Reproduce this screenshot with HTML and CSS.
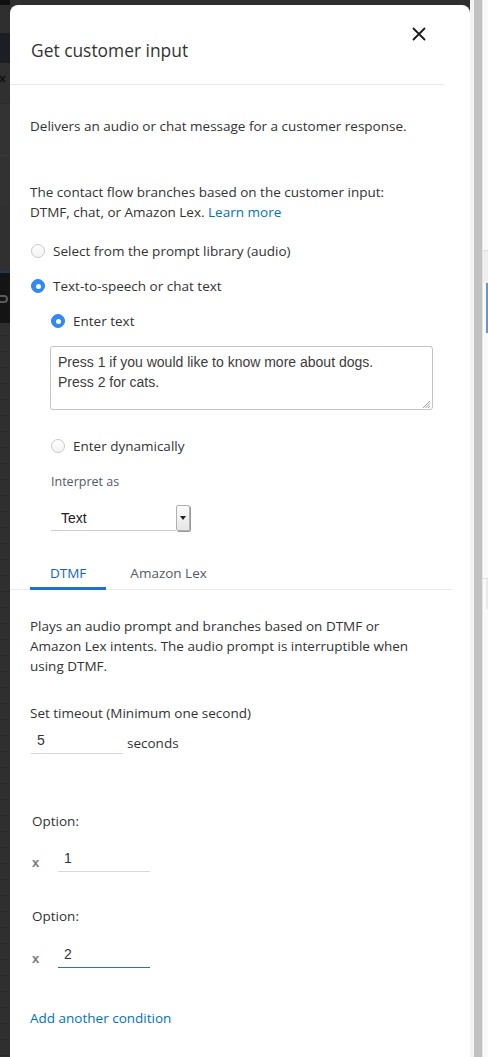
FILE: index.html
```html
<!DOCTYPE html>
<html lang="en">
<head>
<meta charset="utf-8">
<title>Get customer input</title>
<link rel="stylesheet" href="styles.css">
</head>
<body>
<div class="screen">
  <div class="backdrop-left">
    <div class="bg-a"></div>
    <div class="bg-b"></div>
    <div class="bg-c"></div>
    <div class="bg-d"><svg class="bg-x" width="6" height="8" viewBox="0 0 6 8"><path d="M0 1 L5 7 M5 1 L0 7" stroke="#111" stroke-width="1.4"/></svg></div>
    <div class="bg-e"></div>
    <div class="bg-f"></div>
    <div class="bg-g"></div>
    <div class="bg-h"><span class="bg-glyph"></span></div>
    <div class="bg-i"></div>
  </div>

  <main class="panel">
    <header class="panel-header">
      <h1 class="panel-title">Get customer input</h1>
      <button class="close-btn" aria-label="Close">
        <svg width="14" height="14" viewBox="0 0 14 14"><path d="M1.5 1.5 L12.5 12.5 M12.5 1.5 L1.5 12.5" stroke="#1a1a1a" stroke-width="1.8" stroke-linecap="round"/></svg>
      </button>
    </header>

    <section class="panel-body">
      <p class="intro">Delivers an audio or chat message for a customer response.</p>
      <p class="branches">The contact flow branches based on the customer input: DTMF, chat, or Amazon Lex. <a class="link" href="#">Learn more</a></p>

      <div class="radio-row first">
        <span class="radio"></span>
        <span class="radio-label">Select from the prompt library (audio)</span>
      </div>
      <div class="radio-row">
        <span class="radio checked"></span>
        <span class="radio-label">Text-to-speech or chat text</span>
      </div>

      <div class="nested">
        <div class="radio-row">
          <span class="radio checked"></span>
          <span class="radio-label">Enter text</span>
        </div>
        <div class="textarea">Press 1 if you would like to know more about dogs.<br>Press 2 for cats.<span class="grip"><svg width="10" height="10" viewBox="0 0 10 10"><path d="M9 2 L2 9 M9 4.5 L4.5 9 M9 7 L7 9" stroke="#888" stroke-width="0.8"/></svg></span></div>
        <div class="radio-row dyn">
          <span class="radio"></span>
          <span class="radio-label">Enter dynamically</span>
        </div>
        <div class="field-label">Interpret as</div>
        <div class="select">
          <span class="select-value">Text</span>
          <span class="select-btn"><svg width="6" height="4" viewBox="0 0 6 4"><path d="M0 0 H6 L3 4 Z" fill="#222"/></svg></span>
        </div>
      </div>

      <nav class="tabs">
        <span class="tab active">DTMF</span>
        <span class="tab">Amazon Lex</span>
      </nav>

      <p class="plays">Plays an audio prompt and branches based on DTMF or Amazon Lex intents. The audio prompt is interruptible when using DTMF.</p>

      <div class="timeout-label">Set timeout (Minimum one second)</div>
      <div class="timeout-row">
        <span class="input wide">5</span>
        <span class="unit">seconds</span>
      </div>

      <div class="option-label first-opt">Option:</div>
      <div class="option-row">
        <span class="remove">x</span>
        <span class="input">1</span>
      </div>

      <div class="option-label">Option:</div>
      <div class="option-row second">
        <span class="remove">x</span>
        <span class="input focused">2</span>
      </div>

      <a class="link add" href="#">Add another condition</a>
    </section>
  </main>

  <div class="backdrop-right">
    <div class="edge"></div>
    <div class="scroll-track"></div>
    <div class="far">
      <div class="far-a"></div>
      <div class="far-b"></div>
      <div class="far-c"></div>
      <div class="far-d"></div>
      <div class="far-e"></div>
    </div>
  </div>
</div>
</body>
</html>
```

FILE: styles.css
```css
* { box-sizing: border-box; }

html, body {
  margin: 0;
  padding: 0;
  width: 488px;
  height: 1057px;
  overflow: hidden;
}

body {
  font-family: "Open Sans", "Noto Sans", sans-serif;
  font-size: 13.5px;
  color: #333;
  background: #2e2e2e;
}

.screen {
  display: flex;
  height: 1057px;
}

/* left backdrop */
.backdrop-left {
  width: 10px;
  flex: none;
  display: flex;
  flex-direction: column;
  background: repeating-linear-gradient(to bottom, #2f2f2f 0, #2f2f2f 15px, #292929 15px, #292929 16px);
}
.bg-a { height: 5px; background: #0f0f0f; }
.bg-b { height: 28px; background: #2f2f2f; }
.bg-c { height: 30px; background: #1b1e25; }
.bg-d { height: 40px; background: #303030; display: flex; align-items: flex-start; }
.bg-x { margin-top: 12px; }
.bg-e { height: 52px; background: #333; border-top: 1px solid #2a2a2a; }
.bg-f { height: 50px; background: #323232; border-top: 1px solid #3a3a3a; }
.bg-g { height: 68px; background: #303030; border-bottom: 2px solid #1f3a5c; }
.bg-h { height: 50px; background: #141414; display: flex; align-items: center; }
.bg-glyph { width: 8px; height: 8px; border: 2px solid #5a5a5a; border-left: 0; border-radius: 0 4px 4px 0; margin-top: 2px; }
.bg-i { flex: 1; }

/* panel */
.panel {
  width: 460px;
  flex: none;
  margin-top: 5px;
  background: #fff;
  border-radius: 8px 8px 0 0;
  display: flex;
  flex-direction: column;
}

.panel-header {
  width: 435px;
  height: 80px;
  border-bottom: 1px solid #e9ebed;
  display: flex;
  align-items: flex-start;
  justify-content: space-between;
  padding: 0 0 0 21px;
}
.panel-title {
  margin: 34px 0 0 0;
  font-size: 17.4px;
  font-weight: 400;
  line-height: 22px;
  color: #333;
}
.close-btn {
  margin: 22px 19px 0 0;
  padding: 0;
  border: 0;
  background: none;
  width: 14px;
  height: 14px;
  display: flex;
}

.panel-body {
  padding: 0 0 0 20px;
  display: flex;
  flex-direction: column;
  align-items: flex-start;
}

p { margin: 0; line-height: 20px; }

.intro { margin-top: 31px; }
.branches { margin-top: 46px; width: 375px; }

.link { color: #0073bb; text-decoration: none; }

.radio-row {
  display: flex;
  align-items: center;
  height: 20px;
  gap: 8px;
  margin-top: 15px;
}
.radio-row.first { margin-top: 19px; }

.radio {
  width: 14px;
  height: 14px;
  border-radius: 50%;
  border: 1px solid #c9c9c9;
  background: linear-gradient(#fff, #f3f3f3);
  flex: none;
  margin-left: 1px;
  position: relative;
}
.radio.checked {
  border-color: #2f86f2;
  background: #3189f5;
}
.radio.checked::after {
  content: "";
  position: absolute;
  left: 3.5px;
  top: 3.5px;
  width: 5px;
  height: 5px;
  border-radius: 50%;
  background: #fff;
}

.nested {
  padding-left: 20px;
  display: flex;
  flex-direction: column;
  align-items: flex-start;
}

.textarea {
  margin-top: 15px;
  width: 383px;
  height: 64px;
  border: 1px solid #c4c4c4;
  border-radius: 3px;
  padding: 5px 7px;
  font-family: "Liberation Sans", Arial, sans-serif;
  font-size: 14px;
  line-height: 20px;
  color: #3c3c3c;
  position: relative;
}
.grip { position: absolute; right: 1px; bottom: 0; display: flex; }

.radio-row.dyn { margin-top: 26px; }

.field-label {
  margin-top: 17px;
  font-size: 12.5px;
  line-height: 18px;
  color: #545b64;
  padding-left: 1px;
}

.select {
  margin-top: 14px;
  margin-left: 1px;
  width: 139px;
  height: 26px;
  display: flex;
  align-items: stretch;
}
.select-value {
  flex: 1;
  border-bottom: 1px solid #cfcfcf;
  padding: 4px 0 0 10px;
  font-family: "Liberation Sans", Arial, sans-serif;
  font-size: 14px;
  line-height: 18px;
  color: #222;
}
.select-btn {
  width: 14px;
  border: 1px solid #b0b0b0;
  border-radius: 2px;
  background: linear-gradient(#fbfbfb, #e6e6e6);
  display: flex;
  align-items: center;
  justify-content: center;
  box-shadow: 1px 1px 0 #9a9a9a;
}

.tabs {
  margin-top: 20px;
  margin-left: -20px;
  width: 443px;
  padding-left: 20px;
  display: flex;
  border-bottom: 1px solid #eaeded;
}
.tab {
  padding: 12px 20px 4px;
  line-height: 20px;
  border-bottom: 3px solid transparent;
  margin-bottom: -1px;
  color: #545b64;
  font-size: 13.5px;
}
.tab + .tab { padding-left: 24px; }
.tab.active {
  color: #1166bb;
  border-bottom-color: #1f6fd0;
}

.plays { margin-top: 26px; width: 388px; }

.timeout-label { margin-top: 27px; line-height: 20px; }

.timeout-row {
  margin-top: 5px;
  display: flex;
  align-items: flex-end;
  gap: 4px;
  margin-left: 1px;
}
.input {
  width: 92px;
  height: 26px;
  border-bottom: 1px solid #d9d9d9;
  padding: 2px 0 0 6px;
  font-family: "Liberation Sans", Arial, sans-serif;
  font-size: 14px;
  line-height: 20px;
  color: #333;
}
.input.focused { border-bottom-color: #2c72b8; }
.unit { line-height: 20px; padding-bottom: 1px; }

.option-label { margin-top: 34px; line-height: 20px; padding-left: 2px; }
.option-label.first-opt { margin-top: 57px; }

.option-row {
  margin-top: 15px;
  display: flex;
  align-items: flex-end;
  gap: 17px;
  padding-left: 2px;
}
.option-row.second { margin-top: 16px; }
.remove {
  width: 9px;
  font-family: "Liberation Sans", Arial, sans-serif;
  font-weight: 700;
  font-size: 13px;
  color: #7a7a7a;
  line-height: 16px;
  padding-bottom: 1px;
}

.add { margin-top: 40px; line-height: 20px; }

/* right backdrop */
.backdrop-right {
  flex: 1;
  display: flex;
}
.edge { width: 4px; background: #f3f3f3; }
.scroll-track { width: 8px; background: #c1c1c1; }
.far {
  flex: 1;
  display: flex;
  flex-direction: column;
  background: #fafafa;
  border-left: 1px solid #e6e6e6;
}
.far-a { height: 250px; }
.far-b { height: 33px; background: #efefef; border-top: 1px solid #ddd; }
.far-c { height: 50px; background: #5b9bd5; margin-left: 3px; }
.far-d { height: 246px; border-bottom: 1px solid #ddd; }
.far-e { height: 30px; background: #eaeaea; margin-left: 3px; }
```
